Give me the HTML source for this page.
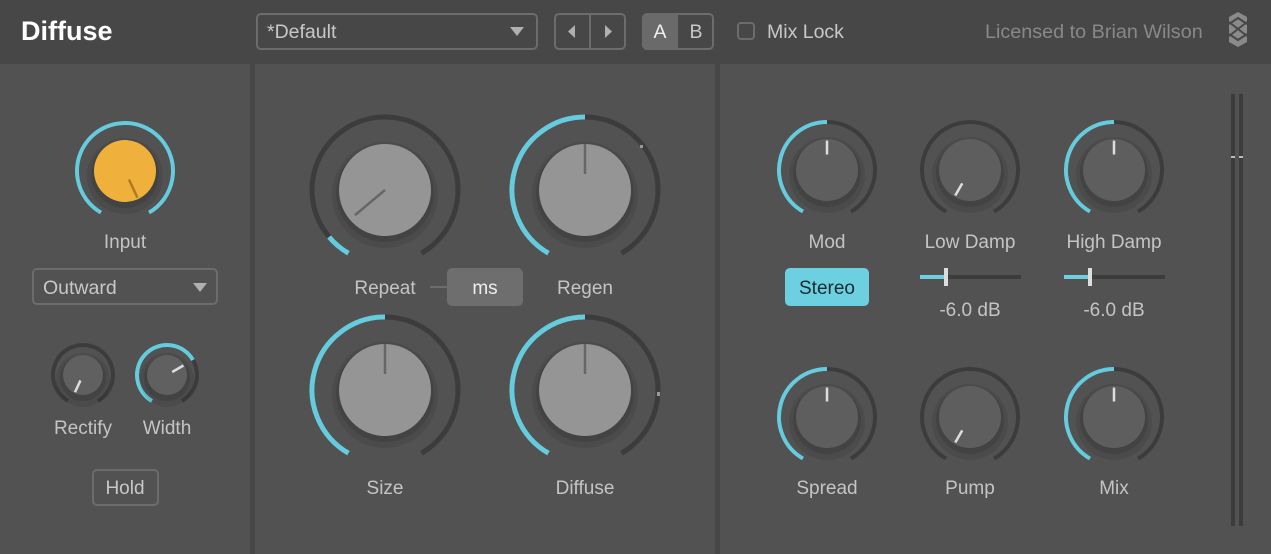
<!DOCTYPE html>
<html><head><meta charset="utf-8">
<style>
body{margin:0;width:1271px;height:554px;overflow:hidden;background:#525252;font-family:"Liberation Sans",sans-serif;}
svg{position:absolute;left:0;top:0}
text{font-family:"Liberation Sans",sans-serif}
</style></head><body>
<svg id="s" width="1271" height="554" viewBox="0 0 1271 554">
<rect x="0" y="0" width="1271" height="554" fill="#525252"/>
<rect x="0" y="0" width="1271" height="64" fill="#474747"/>
<rect x="250" y="64" width="5" height="490" fill="#464646"/>
<rect x="715" y="64" width="5" height="490" fill="#464646"/>
<text x="21" y="40" font-size="27" font-weight="bold" fill="#ffffff">Diffuse</text>
<rect x="257" y="14" width="280" height="35" rx="4" fill="#474747" stroke="#6c6c6c" stroke-width="2"/>
<text x="267" y="38" font-size="19.5" fill="#c8c8c8">*Default</text>
<path d="M510 27 L524 27 L517 36 Z" fill="#b0b0b0"/>
<rect x="555" y="14" width="70" height="35" rx="4" fill="#474747" stroke="#6c6c6c" stroke-width="2"/>
<line x1="590" y1="14" x2="590" y2="49" stroke="#6c6c6c" stroke-width="2"/>
<path d="M575 25 L568 31.5 L575 38 Z" fill="#b0b0b0"/>
<path d="M605 25 L612 31.5 L605 38 Z" fill="#b0b0b0"/>
<rect x="643" y="14" width="70" height="35" rx="4" fill="#474747" stroke="#6c6c6c" stroke-width="2"/>
<path d="M647 13 H678 V50 H647 A4 4 0 0 1 643 46 V17 A4 4 0 0 1 647 13Z" fill="#6a6a6a"/>
<text x="660" y="38" font-size="19.5" fill="#f0f0f0" text-anchor="middle">A</text>
<text x="696" y="38" font-size="19.5" fill="#c8c8c8" text-anchor="middle">B</text>
<rect x="738" y="23" width="16" height="16" rx="3" fill="none" stroke="#6c6c6c" stroke-width="2"/>
<text x="767" y="38" font-size="19.5" fill="#c8c8c8">Mix Lock</text>
<text x="985" y="38" font-size="19.8" fill="#888">Licensed to Brian Wilson</text>
<path d="M1238 12 L1247 17 L1247 42 L1238 47 L1229 42 L1229 17 Z" fill="#8a8a8a"/>
<g stroke="#474747" stroke-width="2" fill="none">
<path d="M1229 22 L1247 36"/>
<path d="M1247 22 L1229 36"/>
<path d="M1229 24 L1238 18 L1247 24"/>
<path d="M1229 34 L1238 40 L1247 34"/>
</g>
<rect x="1231" y="94" width="4" height="432" fill="#3c3c3c"/>
<rect x="1239" y="94" width="4" height="432" fill="#3c3c3c"/>
<rect x="1231" y="156" width="4" height="2" fill="#bbb"/>
<rect x="1239" y="156" width="4" height="2" fill="#bbb"/>
<g id="k"></g>
<g font-size="19" fill="#c4c4c4" text-anchor="middle">
<text x="125" y="248">Input</text>
<text x="385" y="294">Repeat</text>
<text x="585" y="294">Regen</text>
<text x="385" y="494">Size</text>
<text x="585" y="494">Diffuse</text>
<text x="83" y="434">Rectify</text>
<text x="167" y="434">Width</text>
<text x="827" y="248">Mod</text>
<text x="970" y="248">Low Damp</text>
<text x="1114" y="248">High Damp</text>
<text x="827" y="494">Spread</text>
<text x="970" y="494">Pump</text>
<text x="1114" y="494">Mix</text>
<text x="970" y="316">-6.0 dB</text>
<text x="1114" y="316">-6.0 dB</text>
</g>
<rect x="33" y="269" width="184" height="35" rx="4" fill="none" stroke="#6c6c6c" stroke-width="2"/>
<text x="43" y="294" font-size="19.5" fill="#c8c8c8">Outward</text>
<path d="M193 283 L207 283 L200 292 Z" fill="#b0b0b0"/>
<rect x="93" y="470" width="65" height="35" rx="4" fill="none" stroke="#6c6c6c" stroke-width="2"/>
<text x="125" y="494" font-size="19" fill="#c8c8c8" text-anchor="middle">Hold</text>
<line x1="430" y1="287" x2="447" y2="287" stroke="#6c6c6c" stroke-width="2"/>
<rect x="447" y="268" width="76" height="38" rx="5" fill="#6e6e6e"/>
<text x="485" y="294" font-size="19" fill="#eee" text-anchor="middle">ms</text>
<rect x="785" y="268" width="84" height="38" rx="5" fill="#6dd0e0"/>
<text x="827" y="294" font-size="19" fill="#1a2a30" text-anchor="middle">Stereo</text>
<rect x="920" y="275" width="101" height="4" fill="#3c3c3c"/>
<rect x="920" y="275" width="25" height="4" fill="#6dd0e0"/>
<rect x="944" y="268" width="4" height="18" fill="#ddd"/>
<rect x="1064" y="275" width="101" height="4" fill="#3c3c3c"/>
<rect x="1064" y="275" width="25" height="4" fill="#6dd0e0"/>
<rect x="1088" y="268" width="4" height="18" fill="#ddd"/>
</svg>
<script>
var g=document.getElementById('k'),h='';
function pt(cx,cy,r,a){a=a*Math.PI/180;return [cx+r*Math.sin(a),cy-r*Math.cos(a)];}
function arc(cx,cy,r,a1,a2,c,w){var p=pt(cx,cy,r,a1),q=pt(cx,cy,r,a2);var l=(a2-a1)>180?1:0;
return '<path d="M'+p[0]+' '+p[1]+' A'+r+' '+r+' 0 '+l+' 1 '+q[0]+' '+q[1]+'" fill="none" stroke="'+c+'" stroke-width="'+w+'"/>';}
function knob(cx,cy,R,kr,fill,pa,c1,c2,w,pc,pin,pout){
 h+=arc(cx,cy,R,-150,150,'#3c3c3c',w);
 if(c1!==null)h+=arc(cx,cy,R,c1,c2,'#66cbdc',w);
 h+='<circle cx="'+cx+'" cy="'+(cy+5)+'" r="'+(kr+7)+'" fill="#000" opacity="0.08"/>';
 h+='<circle cx="'+cx+'" cy="'+(cy+3)+'" r="'+(kr+3)+'" fill="#000" opacity="0.1"/>';
 h+='<circle cx="'+cx+'" cy="'+cy+'" r="'+kr+'" fill="'+fill+'"/>';
 var a=pt(cx,cy,kr*pin,pa),b=pt(cx,cy,kr*pout,pa);
 h+='<line x1="'+a[0]+'" y1="'+a[1]+'" x2="'+b[0]+'" y2="'+b[1]+'" stroke="'+pc+'" stroke-width="2.5"/>';
}
knob(125,171,48,31,'#f0b03c',155,-150,150,4,'#b07a20',0.3,0.95);
knob(385,190,73,46,'#959595',-130,-150,-130,5,'#666',0,0.85);
knob(585,190,73,46,'#959595',0,-150,0,5,'#666',0.35,1);
knob(385,390,73,46,'#959595',0,-150,0,5,'#666',0.35,1);
knob(585,390,73,46,'#959595',0,-150,0,5,'#666',0.35,1);
knob(83,375,30,20,'#606060',-155,null,0,4,'#ddd',0.3,0.95);
knob(167,375,30,20,'#606060',60,-150,60,4,'#ddd',0.3,0.95);
knob(827,170,48,31,'#5e5e5e',0,-150,0,4,'#ddd',0.5,0.95);
knob(970,170,48,31,'#5e5e5e',-150,null,0,4,'#ddd',0.5,0.95);
knob(1114,170,48,31,'#5e5e5e',0,-150,0,4,'#ddd',0.5,0.95);
knob(827,417,48,31,'#5e5e5e',0,-150,0,4,'#ddd',0.5,0.95);
knob(970,417,48,31,'#5e5e5e',-150,null,0,4,'#ddd',0.5,0.95);
knob(1114,417,48,31,'#5e5e5e',0,-150,0,4,'#ddd',0.5,0.95);
h+='<rect x="640" y="145" width="3" height="3" fill="#999"/><rect x="657" y="392" width="3" height="4" fill="#999"/>';
g.innerHTML=h;
</script>
</body></html>
